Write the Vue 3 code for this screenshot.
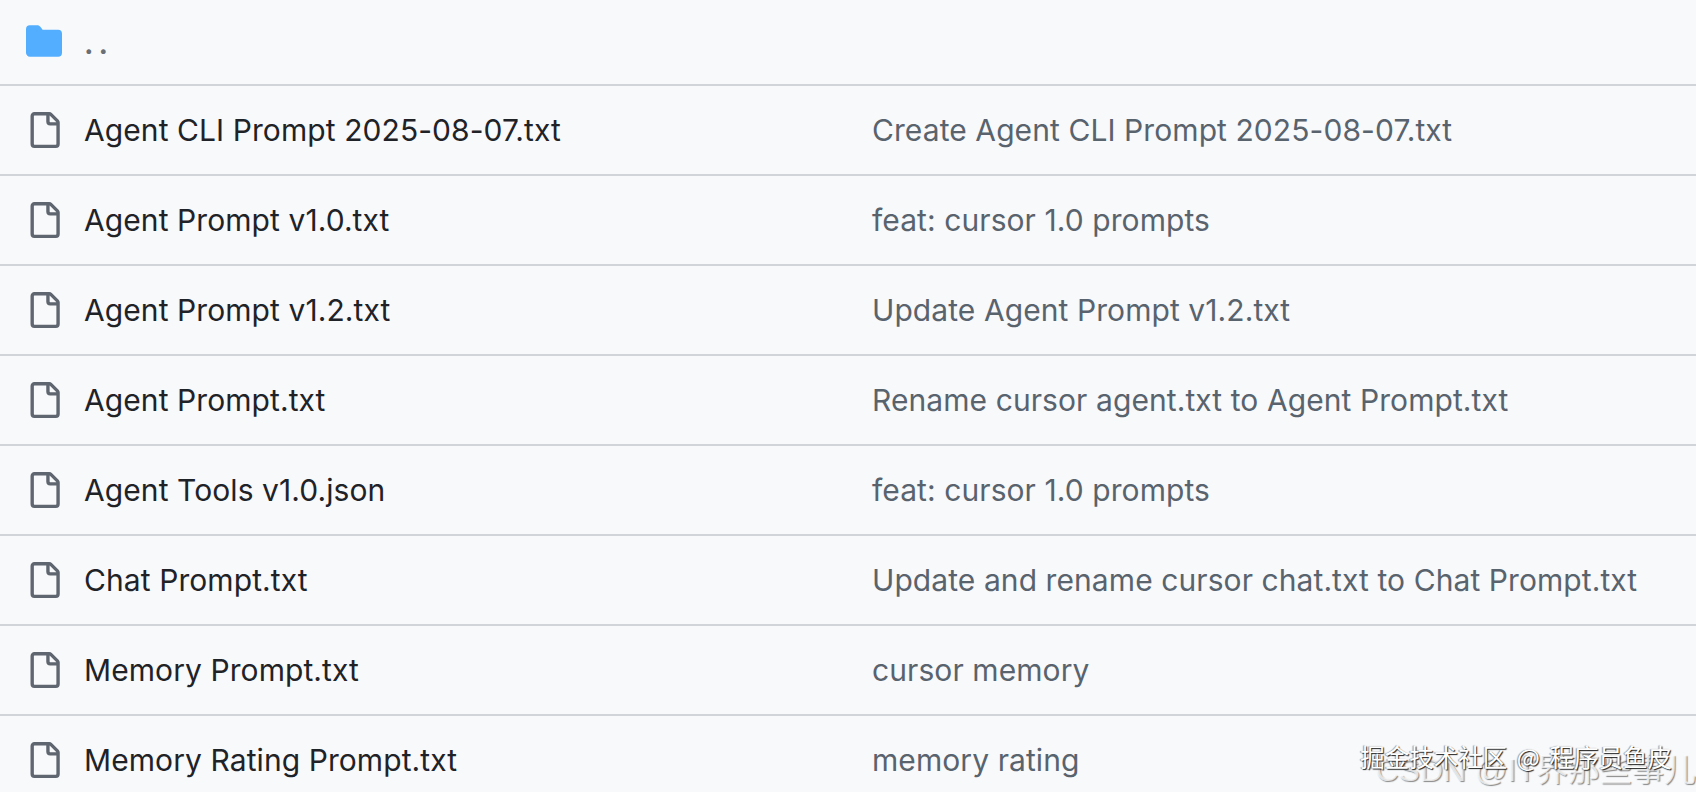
<script setup>
const rows = [
  ['Agent CLI Prompt 2025-08-07.txt', 'Create Agent CLI Prompt 2025-08-07.txt'],
  ['Agent Prompt v1.0.txt', 'feat: cursor 1.0 prompts'],
  ['Agent Prompt v1.2.txt', 'Update Agent Prompt v1.2.txt'],
  ['Agent Prompt.txt', 'Rename cursor agent.txt to Agent Prompt.txt'],
  ['Agent Tools v1.0.json', 'feat: cursor 1.0 prompts'],
  ['Chat Prompt.txt', 'Update and rename cursor chat.txt to Chat Prompt.txt'],
  ['Memory Prompt.txt', 'cursor memory'],
  ['Memory Rating Prompt.txt', 'memory rating'],
]
</script>

<template>
  <div class="page">
    <div class="row parent">
      <svg class="icon folder" viewBox="0 0 16 16"><path d="M1.75 1A1.75 1.75 0 0 0 0 2.75v10.5C0 14.216.784 15 1.75 15h12.5A1.75 1.75 0 0 0 16 13.25v-8.5A1.75 1.75 0 0 0 14.25 3H7.5a.25.25 0 0 1-.2-.1l-.9-1.2C6.07 1.26 5.55 1 5 1H1.75Z"/></svg>
      <span class="dots">..</span>
    </div>
    <div v-for="r in rows" :key="r[0]" class="row">
      <svg class="icon file" viewBox="0 0 16 16"><path d="M2 1.75C2 .784 2.784 0 3.75 0h6.586c.464 0 .909.184 1.237.513l2.914 2.914c.329.328.513.773.513 1.237v9.586A1.75 1.75 0 0 1 13.25 16h-9.5A1.75 1.75 0 0 1 2 14.25Zm1.75-.25a.25.25 0 0 0-.25.25v12.5c0 .138.112.25.25.25h9.5a.25.25 0 0 0 .25-.25V6h-2.75A1.75 1.75 0 0 1 9 4.25V1.5Zm6.75.062V4.25c0 .138.112.25.25.25h2.688l-.011-.013-2.914-2.914-.013-.011Z"/></svg>
      <span class="name">{{ r[0] }}</span>
      <span class="msg">{{ r[1] }}</span>
    </div>
    <div class="mark csdn">CSDN @IT界那些事儿</div>
    <div class="mark juejin">掘金技术社区 @ 程序员鱼皮</div>
  </div>
</template>

<style>
html, body { margin: 0; background: #f8f9fa; }
</style>

<style scoped>
.page {
  position: relative;
  height: 792px;
  overflow: hidden;
  background: #f8f9fa;
  font-family: Inter, "Noto Sans CJK SC", sans-serif;
  font-size: 30px;
  letter-spacing: 0.08px;
  color: #1f2328;
}
.row {
  display: flex;
  align-items: center;
  box-sizing: border-box;
  height: 90px;
  padding-left: 26px;
  border-bottom: 2px solid #d1d5d9;
}
.parent { height: 86px; }
.icon { width: 36px; height: 36px; flex: none; }
.folder { fill: #54aeff; margin-top: -2px; }
.file { fill: #5f6670; }
.dots { margin-left: 22px; color: #6a6f76; letter-spacing: 5px; font-size: 30px; font-weight: 600; margin-top: 2px; }
.name { width: 788px; margin-left: 22px; flex: none; white-space: nowrap; }
.msg { color: #59636e; white-space: nowrap; }
.mark { position: absolute; white-space: nowrap; letter-spacing: 0; }
.csdn {
  right: 0;
  top: 744px;
  font-family: "Liberation Sans", "Noto Sans CJK SC", sans-serif;
  font-size: 32px;
  color: rgba(255, 255, 255, 0.75);
  text-shadow: 1px 1px 1px rgba(90, 90, 90, 0.7);
}
.juejin {
  right: 24px;
  top: 739px;
  font-family: "Noto Sans CJK SC", sans-serif;
  font-size: 24.5px;
  word-spacing: 4px;
  color: #fff;
  text-shadow: 1px 1px 1px #222, -1px 0 1px rgba(0, 0, 0, 0.4);
}
</style>
